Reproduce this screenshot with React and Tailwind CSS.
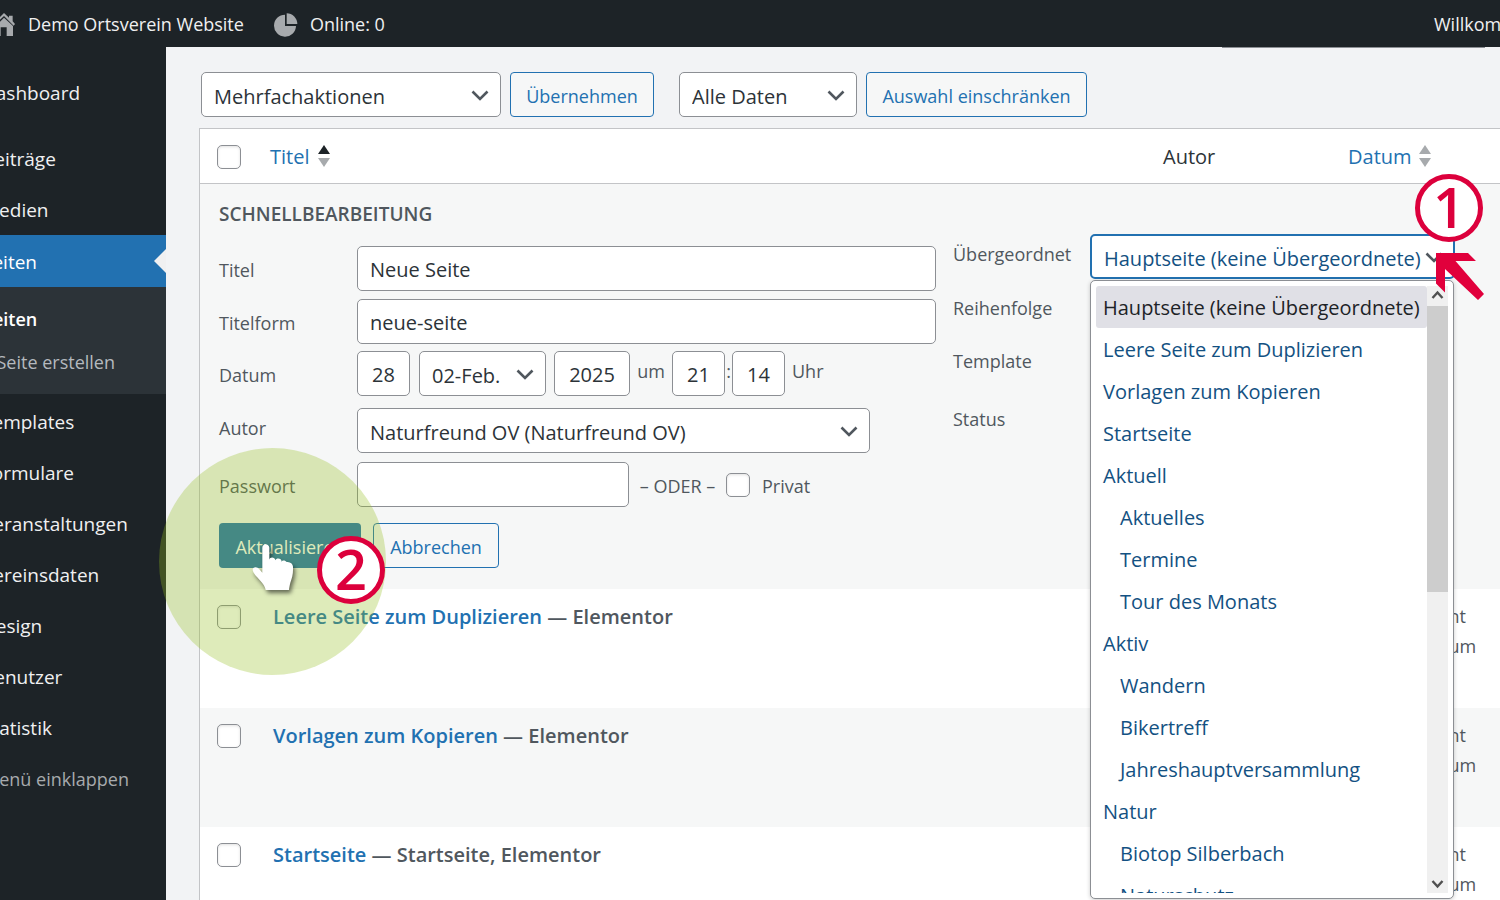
import React from 'react';

const menuTop = ['Beiträge', 'Medien'];
const menuBottom = ['Templates', 'Formulare', 'Veranstaltungen', 'Vereinsdaten', 'Design', 'Benutzer', 'Statistik'];

const parentPages = [
  ['Hauptseite (keine Übergeordnete)', 0],
  ['Leere Seite zum Duplizieren', 0],
  ['Vorlagen zum Kopieren', 0],
  ['Startseite', 0],
  ['Aktuell', 0],
  ['Aktuelles', 1],
  ['Termine', 1],
  ['Tour des Monats', 1],
  ['Aktiv', 0],
  ['Wandern', 1],
  ['Bikertreff', 1],
  ['Jahreshauptversammlung', 1],
  ['Natur', 0],
  ['Biotop Silberbach', 1],
  ['Naturschutz', 1],
];

const pages = [
  { title: 'Leere Seite zum Duplizieren', state: 'Elementor', row: 'bg-white' },
  { title: 'Vorlagen zum Kopieren', state: 'Elementor', row: 'bg-[#f6f7f7]' },
  { title: 'Startseite', state: 'Startseite, Elementor', row: 'bg-white' },
];

const field = 'h-[45px] rounded-[5px] border border-[#8c8f94] bg-white text-[20px] text-[#2c3338]';
const input = `${field} pt-0.5`;

function Chevron({ className }) {
  return (
    <svg viewBox="0 0 18 12" className={`pointer-events-none absolute top-[18px] h-3 w-[18px] ${className}`} fill="none" stroke="#50575e" strokeWidth="2.6" aria-hidden="true">
      <path d="M1.5 1.5 9 9l7.5-7.5" />
    </svg>
  );
}

function Select({ id, label, value, className = '', box = '', chevron = 'right-3' }) {
  return (
    <span className={`relative block shrink-0 ${box}`}>
      <select id={id} aria-label={label} className={`${field} w-full appearance-none pt-1 pr-7 pl-3 ${className}`}>
        <option>{value}</option>
      </select>
      <Chevron className={chevron} />
    </span>
  );
}

function Check({ id, label }) {
  return (
    <input
      id={id}
      type="checkbox"
      aria-label={label}
      className="block size-6 shrink-0 appearance-none rounded-[5px] border border-[#8c8f94] bg-white shadow-[inset_0_1px_3px_rgba(0,0,0,0.12)]"
    />
  );
}

function Sort({ active }) {
  return (
    <svg viewBox="0 0 14 24" className="h-6 w-[14px]" aria-hidden="true">
      <path d="M7 0 13 9H1z" fill={active ? '#1d2327' : '#a7aaad'} />
      <path d="M7 22 13 13H1z" fill="#a7aaad" />
    </svg>
  );
}

function Step({ n, className }) {
  return (
    <span className={`pointer-events-none absolute z-40 flex size-[68px] items-center justify-center rounded-full border-[5px] border-[#dc003c] bg-white pb-1 text-[56px] leading-none font-semibold text-[#dc003c] ${className}`}>
      {n}
    </span>
  );
}

function Row({ id, label, children, className = '', labelClass = '' }) {
  return (
    <div className={`flex items-center ${className}`}>
      <label htmlFor={id} className={`w-[138px] shrink-0 ${labelClass}`}>{label}</label>
      {children}
    </div>
  );
}

function AdminBar() {
  return (
    <header className="flex h-[47px] shrink-0 items-center overflow-hidden bg-[#1d2327] pt-0.5 text-[18px] whitespace-nowrap text-[#f0f0f1]">
      <a href="#site" className="flex items-center gap-[13px]">
        <svg viewBox="0 0 45 72" className="h-6 w-[15px]" fill="#a7aaad" aria-hidden="true">
          <path d="M12 0 27 14V8h11v17l7 8-4 5L12 9 0 20V12z" />
          <path d="M12 14 0 26v43h2V43h18v26h19V39z" />
        </svg>
        Demo Ortsverein Website
      </a>
      <a href="#online" className="ml-[30px] flex items-center gap-3">
        <svg viewBox="0 0 72 72" className="size-6" fill="#a7aaad" aria-hidden="true">
          <path d="M33 5v34h33A33 33 0 1 1 33 5z" />
          <path d="M38 1a32 32 0 0 1 32 32H38z" />
        </svg>
        Online: 0
      </a>
      <a href="#profil" className="ml-auto w-[66px]">Willkommen</a>
    </header>
  );
}

function SideItem({ children, className = '' }) {
  return (
    <li className={className}>
      <a href="#menu" className="-ml-[18px] flex h-[51px] items-center pt-0.5">{children}</a>
    </li>
  );
}

function Sidebar() {
  return (
    <nav className="w-[166px] shrink-0 overflow-hidden bg-[#1d2327] pt-5 text-[19px] whitespace-nowrap text-[#f0f0f1]">
      <ul>
        <SideItem className="mb-[15px]">Dashboard</SideItem>
        {menuTop.map((m) => <SideItem key={m}>{m}</SideItem>)}
        <li>
          <a href="#seiten" className="flex h-[52px] items-center justify-between bg-[#2271b1] text-white">
            <span className="-ml-[18px] pt-0.5">Seiten</span>
            <svg viewBox="0 0 12 24" className="h-6 w-3" fill="#f0f0f1" aria-hidden="true"><path d="M12 0v24L0 12z" /></svg>
          </a>
          <ul className="mb-0.5 flex h-[107px] flex-col gap-[15px] bg-[#2c3338] pt-[18px] text-[18px] leading-7">
            <li><a href="#alle" className="-ml-[54px] font-semibold text-white">Alle Seiten</a></li>
            <li><a href="#neu" className="-ml-[53px] text-[#b4b9be]">Neue Seite erstellen</a></li>
          </ul>
        </li>
        {menuBottom.map((m) => <SideItem key={m}>{m}</SideItem>)}
        <li><button type="button" className="-ml-[17px] flex h-[51px] items-center pt-0.5 text-[18px] text-[#a7aaad]">Menü einklappen</button></li>
      </ul>
    </nav>
  );
}

function Toolbar() {
  const btn = 'h-[45px] shrink-0 rounded-[4px] border border-[#2271b1] bg-[#f6f7f7] pt-[3px] text-[18px] text-[#2271b1]';
  return (
    <div className="flex pt-6 pl-0.5">
      <Select label="Mehrfachaktionen" value="Mehrfachaktionen" box="w-[300px]" />
      <button type="button" className={`${btn} ml-[9px] w-[144px]`}>Übernehmen</button>
      <Select label="Datumsfilter" value="Alle Daten" box="ml-[25px] w-[178px]" />
      <button type="button" className={`${btn} ml-[9px] w-[221px]`}>Auswahl einschränken</button>
    </div>
  );
}

function ParentMenu() {
  return (
    <div className="absolute top-[46px] left-0 z-30 flex h-[619px] w-[364px] rounded-[5px] border border-[#8c8f94] bg-white p-[5px] shadow-[0_1px_4px_rgba(0,0,0,0.2)]">
      <ul role="listbox" aria-label="Übergeordnet" className="flex-1 overflow-hidden text-[20px] whitespace-nowrap text-[#135182]">
        {parentPages.map(([name, depth], i) => (
          <li
            key={name}
            role="option"
            aria-selected={i === 0}
            className={`flex h-[42px] items-center rounded-[3px] pt-0.5 ${depth ? 'pl-6' : 'pl-[7px]'} ${i === 0 ? 'bg-[#e0e0e6] text-[#1d2327]' : ''}`}
          >
            {name}
          </li>
        ))}
      </ul>
      <div className="flex w-[21px] flex-col bg-[#f0f0f0]" aria-hidden="true">
        <svg viewBox="0 0 21 20" className="h-5 w-[21px]" fill="none" stroke="#505050" strokeWidth="2.4"><path d="m5.500 12 5-5.500 5 5.500" /></svg>
        <span className="h-[286px] bg-[#cdcdcd]" />
        <svg viewBox="0 0 21 20" className="mt-auto h-5 w-[21px]" fill="none" stroke="#505050" strokeWidth="2.4"><path d="m5.500 8 5 5.500 5-5.500" /></svg>
      </div>
    </div>
  );
}

function QuickEdit() {
  return (
    <form className="flex gap-[17px] pr-[45px] pl-[19px] text-[18px] text-[#50575e]">
      <div className="flex-1 pt-4 pb-[21px]">
        <h2 className="mb-[18px] text-[19px] leading-7 font-semibold">SCHNELLBEARBEITUNG</h2>
        <div className="flex flex-col gap-2">
          <Row id="titel" label="Titel" labelClass="pt-[3px]"><input id="titel" defaultValue="Neue Seite" className={`${input} min-w-0 flex-1 px-3`} /></Row>
          <Row id="form" label="Titelform" labelClass="pt-[3px]"><input id="form" defaultValue="neue-seite" className={`${input} min-w-0 flex-1 px-3`} /></Row>
          <Row id="tag" label="Datum" className="-mt-px" labelClass="pt-[3px]">
            <input id="tag" defaultValue="28" className={`${input} w-[53px] text-center`} />
            <Select label="Monat" value="02-Feb." box="ml-[9px] w-[127px]" />
            <input aria-label="Jahr" defaultValue="2025" className={`${input} ml-2 w-[76px] text-center`} />
            <span className="w-[42px] pb-1 text-center">um</span>
            <input aria-label="Stunde" defaultValue="21" className={`${input} w-[53px] text-center`} />
            <span className="w-[7px] pb-1 text-center">:</span>
            <input aria-label="Minute" defaultValue="14" className={`${input} w-[53px] text-center`} />
            <span className="ml-[7px] pb-1">Uhr</span>
          </Row>
          <Row id="autor" label="Autor" className="mt-1" labelClass="pb-1"><Select id="autor" value="Naturfreund OV (Naturfreund OV)" box="w-[513px]" /></Row>
          <Row id="pass" label="Passwort" className="mt-px" labelClass="pt-[3px]">
            <input id="pass" className={`${input} w-[272px] px-3`} />
            <span className="w-[97px] pt-[3px] text-center whitespace-nowrap">– ODER –</span>
            <Check id="privat" label="Privat" />
            <label htmlFor="privat" className="ml-3 pt-[3px]">Privat</label>
          </Row>
        </div>
        <div className="relative mt-4 flex gap-3">
          <button type="button" className="h-[45px] w-[142px] rounded-[4px] bg-[#2271b1] pt-[3px] text-white">Aktualisieren</button>
          <button type="button" className="h-[45px] w-[126px] rounded-[4px] border border-[#2271b1] bg-[#f6f7f7] pt-[3px] text-[#2271b1]">Abbrechen</button>
          <span className="pointer-events-none absolute -top-[75px] -left-[60px] z-20 size-[227px] rounded-full bg-[#95be20]/31" />
          <svg viewBox="0 0 144 156" className="pointer-events-none absolute top-5 left-[32px] z-30 h-[52px] w-12 drop-shadow-[2px_3px_2px_rgba(0,0,0,0.55)]" fill="#fff" aria-hidden="true">
            <path d="M34 14c0-14 20-14 21 0v36c1-9 17-9 18 2 3-9 19-7 19 4 2-6 12-4 15 1 8 0 18 3 19 14 1 22-3 35-8 48-2 8-4 18-4 22H44c-1-10-8-19-16-28C18 101 6 91 5 80c2-10 15-8 20-1l9 10z" />
          </svg>
          <Step n="2" className="top-[13px] left-[98px]" />
        </div>
      </div>
      <div className="flex w-[502px] shrink-0 flex-col gap-2 pt-[50px]">
        <div className="relative flex">
          <label htmlFor="parent" className="w-[137px] shrink-0 pt-[6px] leading-7">Übergeordnet</label>
          <div className="relative shrink-0">
            <Select id="parent" value="Hauptseite (keine Übergeordnete)" box="w-[365px]" className="border-2 border-[#2271b1] text-[#135182]" />
            <ParentMenu />
            <Step n="1" className="-top-[60px] left-[325px]" />
            <svg viewBox="0 0 48 48" className="pointer-events-none absolute top-[18px] left-[346px] z-40 size-12" fill="#e1003c" aria-hidden="true">
              <path d="M0 1H32L40 9H19.500L48 42 42 48 9 17V40.500L0 31.500z" />
            </svg>
          </div>
        </div>
        <Row id="order" label="Reihenfolge" labelClass="pb-0.5"><input id="order" className={`${input} w-[90px] px-3`} /></Row>
        <Row id="template" label="Template" labelClass="pb-0.5"><Select id="template" value="" box="w-[240px]" /></Row>
        <Row id="status" label="Status" className="mt-[5px]" labelClass="pb-0.5"><Select id="status" value="" box="w-[240px]" /></Row>
      </div>
    </form>
  );
}

function PageTable() {
  return (
    <table className="mt-[11px] w-full table-fixed border-separate border-spacing-0 border-t border-l border-[#c3c4c7] bg-white text-left">
      <colgroup>
        <col className="w-[58px]" />
        <col />
        <col className="w-[185px]" />
        <col className="w-[164px]" />
      </colgroup>
      <thead>
        <tr className="h-[55px] text-[20px] text-[#2c3338]">
          <th className="border-b border-[#c3c4c7] pt-0.5 pl-[17px]"><Check label="Alle auswählen" /></th>
          <th className="border-b border-[#c3c4c7] pt-0.5 pl-3 font-normal">
            <a href="#titel" className="flex items-center gap-2 text-[#2271b1]">Titel <Sort active /></a>
          </th>
          <th className="border-b border-[#c3c4c7] pt-0.5 pl-3 font-normal">Autor</th>
          <th className="border-b border-[#c3c4c7] pt-0.5 pl-3 font-normal">
            <a href="#datum" className="flex items-center gap-[6px] text-[#2271b1]">Datum <Sort /></a>
          </th>
        </tr>
      </thead>
      <tbody>
        <tr className="bg-[#f6f7f7]"><td colSpan={4}><QuickEdit /></td></tr>
        {pages.map((p) => (
          <tr key={p.title} className={`h-[119px] align-top ${p.row}`}>
            <td className="pt-4 pl-[17px]"><Check label={`${p.title} auswählen`} /></td>
            <td className="pt-[14px] pl-[15px] text-[20px] leading-7 font-semibold text-[#50575e]">
              <a href="#seite" className="text-[#2271b1]">{p.title}</a> — {p.state}
            </td>
            <td />
            <td className="pt-3 pl-4 text-[18px] leading-[30px] whitespace-nowrap text-[#50575e]">Veröffentlicht<br />28.02.2025 um</td>
          </tr>
        ))}
      </tbody>
    </table>
  );
}

export default function App() {
  return (
    <div className="flex h-screen flex-col overflow-hidden bg-[#f0f0f1] font-['Open_Sans','Noto_Sans',sans-serif]">
      <AdminBar />
      <div className="flex min-h-0 flex-1">
        <Sidebar />
        <main className="min-w-0 flex-1 bg-[#f2f3f5] pl-[33px]">
          <div className="flex justify-end pr-[15px]"><span className="h-px w-[263px] bg-[#8c8f94]" /></div>
          <Toolbar />
          <PageTable />
        </main>
      </div>
    </div>
  );
}
